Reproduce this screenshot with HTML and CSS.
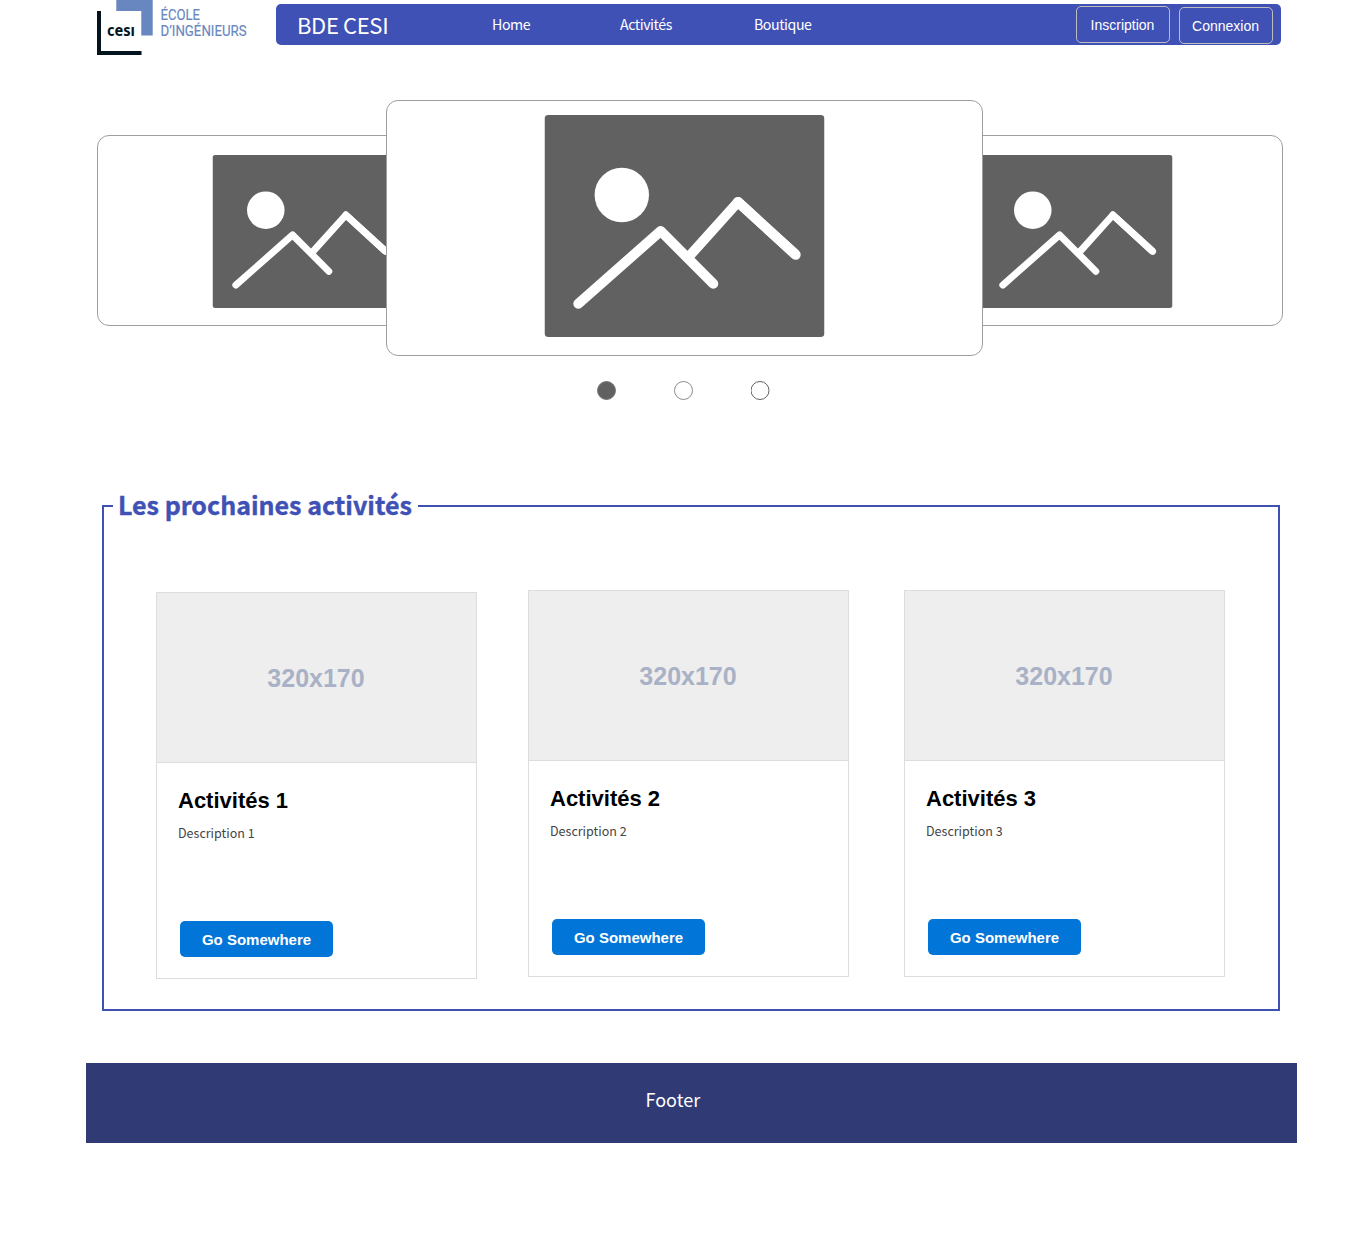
FILE: index.html
```html
<!DOCTYPE html>
<html lang="fr">
<head>
<meta charset="utf-8">
<title>BDE CESI</title>
<link rel="stylesheet" href="styles.css">
</head>
<body>
<svg class="sprite" aria-hidden="true">
  <symbol id="picture" viewBox="0 0 280 222" preserveAspectRatio="none">
    <rect width="280" height="222" rx="4" fill="#616161"/>
    <circle cx="77.3" cy="80" r="27.2" fill="#fff"/>
    <g fill="none" stroke="#fff" stroke-width="10" stroke-linecap="round" stroke-linejoin="round">
      <path d="M33.8 188.7 116.2 116 168.8 168.8"/>
      <path d="M144 142 193.5 87 251.2 139.8" stroke-linecap="butt"/>
      <path d="M193.5 87 251.2 139.8"/>
    </g>
  </symbol>
</svg>
<div class="page">
  <header class="header">
    <svg class="logo" viewBox="0 0 160 55" role="img" aria-label="CESI École d'ingénieurs">
      <path d="M19.3 0H55.7V35.5H44.3V11H19.3Z" fill="#6886c0"/>
      <path d="M0 11H4V51H44.5V55H0Z" fill="#04141f"/>
      <text class="logo-mark" x="10" y="36" textLength="28" lengthAdjust="spacingAndGlyphs">cesı</text>
      <text class="logo-text" x="63.5" y="20" textLength="39.5" lengthAdjust="spacingAndGlyphs">ÉCOLE</text>
      <text class="logo-text" x="63.5" y="35.5" textLength="86" lengthAdjust="spacingAndGlyphs">D’INGÉNIEURS</text>
    </svg>
    <nav class="nav">
      <span class="brand">BDE CESI</span>
      <a class="link link-home">Home</a>
      <a class="link link-activities">Activités</a>
      <a class="link">Boutique</a>
      <div class="account">
        <a class="account-btn">Inscription</a>
        <a class="account-btn account-login">Connexion</a>
      </div>
    </nav>
  </header>

  <section class="carousel">
    <div class="slide slide-prev"><svg><use href="#picture" x="0.5" width="193" height="153"/></svg></div>
    <div class="slide slide-current"><svg><use href="#picture" x="0.5" width="280" height="222"/></svg></div>
    <div class="slide slide-next"><svg><use href="#picture" x="0.5" width="193" height="153"/></svg></div>
  </section>
  <div class="dots">
    <svg viewBox="0 0 20 20"><circle cx="9.5" cy="9.5" r="9" fill="#616161" stroke="#777"/></svg>
    <svg viewBox="0 0 20 20"><circle cx="9.5" cy="9.5" r="9" fill="#fff" stroke="#8c8c8c"/></svg>
    <svg viewBox="0 0 20 20"><circle cx="9" cy="9.5" r="9" fill="#fff" stroke="#616161"/></svg>
  </div>

  <fieldset class="activities">
    <legend>Les prochaines activités</legend>
    <div class="cards">
      <article class="card card-first">
        <div class="thumb">320x170</div>
        <h2>Activités 1</h2>
        <p>Description 1</p>
        <a class="go">Go Somewhere</a>
      </article>
      <article class="card">
        <div class="thumb">320x170</div>
        <h2>Activités 2</h2>
        <p>Description 2</p>
        <a class="go">Go Somewhere</a>
      </article>
      <article class="card card-last">
        <div class="thumb">320x170</div>
        <h2>Activités 3</h2>
        <p>Description 3</p>
        <a class="go">Go Somewhere</a>
      </article>
    </div>
  </fieldset>

  <footer class="footer"><span>Footer</span></footer>
</div>
</body>
</html>
```
FILE: styles.css
```css
* { box-sizing: border-box; }

body {
  margin: 0;
  background: #fff;
  font-family: "Noto Sans CJK SC", "Noto Sans", sans-serif;
}

svg { display: block; }

.sprite { width: 0; height: 0; position: absolute; }

.page {
  width: 1211px;
  height: 1253px;
  margin-left: 86px;
  overflow: hidden;
}

.header { display: flex; height: 100px; padding-left: 11px; }

.logo { width: 160px; height: 55px; margin-right: 19px; }
.logo-mark { font: 700 15.5px "Noto Sans", sans-serif; fill: #04141f; }
.logo-text { font: 400 14.8px Roboto, sans-serif; fill: #6886c0; stroke: #6886c0; stroke-width: 0.15px; }

.nav {
  display: flex;
  width: 1005px;
  height: 41px;
  margin-top: 4px;
  padding: 0 8px 0 21px;
  border-radius: 5px;
  background: #3f51b5;
  color: #fff;
  line-height: 41px;
}
.brand { width: 195px; font-size: 22px; letter-spacing: -0.35px; }
.link { font-size: 14.2px; letter-spacing: -0.45px; }
.link-home { width: 128px; }
.link-activities { width: 134px; }

.account { display: flex; gap: 9px; margin: 2px 0 0 auto; }
.account-btn {
  width: 94px;
  height: 37px;
  padding-right: 1px;
  border: 1px solid #bdbdbd;
  border-radius: 5px;
  font: 14px/36px "Liberation Sans", Arial, sans-serif;
  text-align: center;
}
.account-login { margin-top: 1px; }

.carousel { display: flex; align-items: flex-start; padding-left: 11px; height: 256px; }
.slide {
  display: flex;
  flex: none;
  justify-content: center;
  border: 1px solid #9e9e9e;
  border-radius: 12px;
  background: #fff;
}
.slide-prev, .slide-next { height: 191px; margin-top: 35px; padding-top: 19px; }
.slide-prev svg, .slide-next svg { width: 194px; height: 153px; }
.slide-prev { width: 424px; }
.slide-next { width: 414px; margin-left: -114px; }
.slide-current {
  z-index: 1;
  width: 597px;
  height: 256px;
  margin-left: -135px;
  padding-top: 14px;
}
.slide-current svg { width: 281px; height: 222px; }

.dots { display: flex; gap: 57px; margin: 25px 0 0 511px; }
.dots svg { width: 20px; height: 20px; }

.activities {
  width: 1178px;
  height: 525px;
  margin: 85px 0 0 16px;
  padding: 0 0 0 52px;
  border: 2px solid #3f51b5;
}
.activities legend {
  height: 40px;
  margin-left: -43px;
  padding: 0 6px 0 5px;
  color: #3f51b5;
  font-size: 25px;
  font-weight: 700;
  line-height: 36px;
  -webkit-text-stroke: 0.4px #3f51b5;
}

.cards { display: flex; padding-top: 64px; }
.card {
  display: flex;
  flex-direction: column;
  align-items: flex-start;
  width: 321px;
  height: 387px;
  border: 1px solid #ddd;
}
.card-first { margin: 2px 51px 0 0; }
.card-last { margin-left: 55px; }
.thumb {
  width: 100%;
  height: 170px;
  padding-right: 1px;
  border-bottom: 1px solid #ddd;
  background: #eee;
  color: #a9b1c6;
  font: 700 25px/171px "Liberation Sans", Arial, sans-serif;
  text-align: center;
}
.card h2 {
  margin: 25px 0 0 21px;
  color: #000;
  font: 700 22px/26px "Liberation Sans", Arial, sans-serif;
}
.card p { margin: 9px 0 0 21px; color: #444; font-size: 12.5px; line-height: 20px; }
.go {
  width: 153px;
  height: 36px;
  margin: auto 0 21px 23px;
  border-radius: 5px;
  background: #0275d8;
  color: #fff;
  font: 700 15px/37px "Liberation Sans", Arial, sans-serif;
  text-align: center;
}

.footer {
  height: 80px;
  margin-top: 52px;
  padding-left: 559.5px;
  background: #303a75;
  color: #fff;
  font-size: 18px;
  line-height: 73px;
}
```
